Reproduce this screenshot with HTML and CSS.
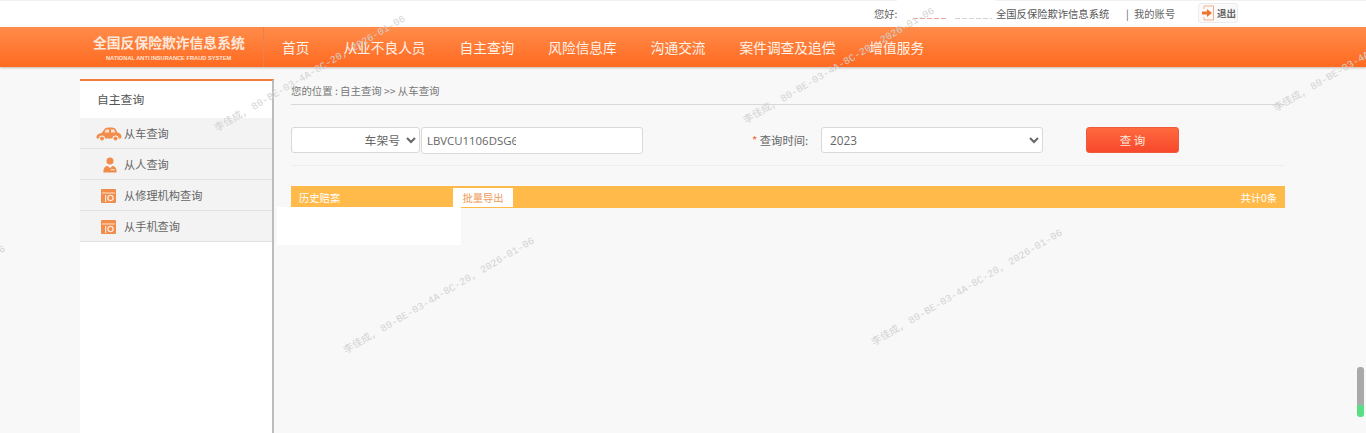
FILE: index.html
```html
<!DOCTYPE html>
<html lang="zh-CN">
<head>
<meta charset="utf-8">
<title>全国反保险欺诈信息系统</title>
<link rel="stylesheet" href="styles.css">
</head>
<body>
<div class="page">
  <header class="topbar">
    <span class="hello">您好:</span>
    <span class="redact"><i class="red-a"></i><i class="red-b"></i></span>
    <span class="sysname">全国反保险欺诈信息系统</span>
    <span class="sep">|</span>
    <span class="account">我的账号</span>
    <a class="logout">
      <svg width="14" height="16" viewBox="0 0 14 16"><path d="M3 4V1h9.500v14H3v-3" fill="none" stroke="#f2b08a" stroke-width="1"/><path d="M1 6.500h5V4l5 4-5 4V9.500H1z" fill="#f0752d"/></svg>
      <span>退出</span>
    </a>
  </header>
  <nav class="nav">
    <div class="logo">
      <div class="logo-cn">全国反保险欺诈信息系统</div>
      <div class="logo-en">NATIONAL ANTI INSURANCE FRAUD SYSTEM</div>
    </div>
    <ul class="menu">
      <li>首页</li><li>从业不良人员</li><li>自主查询</li><li>风险信息库</li><li>沟通交流</li><li>案件调查及追偿</li><li>增值服务</li>
    </ul>
  </nav>
  <div class="main">
    <aside class="side">
      <h2 class="side-title">自主查询</h2>
      <ul class="side-list">
        <li><span class="ico"><svg width="26" height="14" viewBox="0 0 26 14"><path d="M.5 10c0-2.500 2.500-3.500 5-4L9 1.500C10 .5 11 .5 14 .5s4.500 0 5.500 1.500l2 3.500c2 .5 4 1.500 4 4 0 1.500-.5 2-1.500 2h-1.500a3 3 0 0 0-6 0H9a3 3 0 0 0-6 0H1.500C.8 11.500.5 11 .5 10z" fill="#f28c4b"/><path d="M10 2.500h3v3H8.500zM15 2.500h3l1.500 3H15z" fill="#fbe3d2"/><circle cx="6" cy="11.500" r="2" fill="#f28c4b"/><circle cx="19.500" cy="11.500" r="2" fill="#f28c4b"/></svg></span>从车查询</li>
        <li><span class="ico ico-p"><svg width="14" height="16" viewBox="0 0 14 16"><circle cx="7" cy="4" r="3.500" fill="#f28c4b"/><path d="M.5 15.500c-.5-4 1.500-6.500 4-6.500l2.500 2 2.500-2c2.500 0 4.500 2.500 4 6.500z" fill="#f28c4b"/><rect x="8" y="12" width="3.500" height="1.200" fill="#fbe3d2"/></svg></span>从人查询</li>
        <li><span class="ico ico-c"><svg width="15" height="14" viewBox="0 0 15 14"><rect x="0" y="0" width="15" height="14" rx="1" fill="#f28c4b"/><rect x="1" y="3.500" width="13" height="1" fill="#fbe3d2"/><rect x="4" y="6" width="1.200" height="7" fill="#fbe3d2"/><circle cx="9.500" cy="9" r="2.600" fill="none" stroke="#fbe3d2" stroke-width="1.400"/></svg></span>从修理机构查询</li>
        <li><span class="ico ico-c"><svg width="15" height="14" viewBox="0 0 15 14"><rect x="0" y="0" width="15" height="14" rx="1" fill="#f28c4b"/><rect x="1" y="3.500" width="13" height="1" fill="#fbe3d2"/><rect x="4" y="6" width="1.200" height="7" fill="#fbe3d2"/><circle cx="9.500" cy="9" r="2.600" fill="none" stroke="#fbe3d2" stroke-width="1.400"/></svg></span>从手机查询</li>
      </ul>
    </aside>
    <section class="content">
      <div class="crumb">您的位置 : 自主查询 &gt;&gt; 从车查询</div>
      <form class="query">
        <select class="sel sel-type"><option>车架号</option></select>
        <div class="vin"><input class="inp" type="text" value="LBVCU1106DSG6"><i class="vin-mask"></i></div>
        <label class="time-label"><em>*</em> 查询时间:</label>
        <select class="sel sel-year"><option>2023</option></select>
        <button class="btn" type="button">查 询</button>
      </form>
      <div class="bar">
        <span class="bar-title">历史赔案</span>
        <span class="bar-export">批量导出</span>
        <span class="bar-total">共计0条</span>
        <i class="bar-mask"></i>
      </div>
    </section>
  </div>
  <div class="wm wm1">李佳成, 80-BE-03-4A-8C-20, 2026-01-06</div>
  <div class="wm wm2">李佳成, 80-BE-03-4A-8C-20, 2026-01-06</div>
  <div class="wm wm3">李佳成, 80-BE-03-4A-8C-20, 2026-01-06</div>
  <div class="wm wm4">李佳成, 80-BE-03-4A-8C-20, 2026-01-06</div>
  <div class="wm wm5">李佳成, 80-BE-03-4A-8C-20, 2026-01-06</div>
  <div class="wm wm6">李佳成, 80-BE-03-4A-8C-20, 2026-01-06</div>
  <div class="scroll-tip"></div>
</div>
</body>
</html>
```
FILE: styles.css
```css
* { box-sizing: border-box; }
html, body { margin: 0; height: 100%; overflow: hidden; }
body { background: #f8f8f8; font-family: "Noto Sans CJK SC", "Noto Sans", sans-serif; color: #666; font-size: 12px; }
ul { list-style: none; margin: 0; padding: 0; }
.page { position: relative; height: 433px; width: 1366px; overflow: hidden; display: flex; flex-direction: column; }

.topbar { height: 27px; flex: none; background: #fff; border-top: 1px solid #f1f1f1; padding: 0 0 0 874px; display: flex; align-items: center; font-size: 10.300px; line-height: 16px; color: #666; white-space: nowrap; }
.hello { width: 23px; flex: none; }
.redact { width: 99px; height: 21px; align-self: flex-start; background: #fff; margin-top: -1px; position: relative; flex: none; }
.red-a { position: absolute; left: 16px; top: 18px; width: 34px; height: 1px; background: repeating-linear-gradient(90deg, #eda79f 0 5px, #fff 5px 7px); }
.red-b { position: absolute; left: 58px; top: 18px; width: 37px; height: 1px; background: repeating-linear-gradient(90deg, #d3d3d3 0 5px, #fff 5px 7px); }
.sysname { width: 113px; flex: none; color: #555; }
.sep { margin-left: 17px; width: 8px; flex: none; }
.account { width: 42px; flex: none; }
.logout { margin-left: 22px; width: 40px; height: 20px; border: 1px solid #ececec; border-radius: 3px; background: #fafafa; display: flex; align-items: center; gap: 2px; padding-left: 2px; font-weight: 700; color: #666; font-size: 9.500px; margin-bottom: 3px; }

.nav { height: 40px; flex: none; background: linear-gradient(#ff8c4a, #ff6a21); box-shadow: 0 1px 2px rgba(120,70,30,.35); display: flex; padding-left: 80px; }
.logo { width: 184px; padding: 7px 0 0 13px; border-right: 1px solid #e8834f; color: #fff; }
.logo-cn { font-size: 13.800px; line-height: 17px; font-weight: 700; color: #fde9dc; white-space: nowrap; }
.logo-en { font-size: 5.700px; line-height: 8px; font-weight: 700; margin: 3px 0 0 13px; font-family: "Liberation Sans", sans-serif; white-space: nowrap; color: #fbe6d8; }
.menu { display: flex; gap: 34px; padding-left: 18px; color: #fff3ea; font-size: 13.700px; line-height: 40px; }
.menu li { white-space: nowrap; }

.main { flex: 1; display: flex; padding: 12px 81px 0 80px; min-height: 0; }
.side { width: 194px; flex: none; background: #fff; border-top: 2px solid #f27b3c; border-right: 2px solid #bdbdbd; }
.side-title { margin: 0; height: 37px; padding-left: 17px; font-weight: 400; font-size: 11.800px; line-height: 35px; color: #555; }
.side-list li { height: 31px; background: #f3f3f3; border-bottom: 1px solid #e0e0e0; display: flex; align-items: center; padding-left: 44px; position: relative; color: #666; font-size: 11.200px; line-height: 30px; }
.ico { position: absolute; left: 16px; top: 9px; display: block; line-height: 0; }
.ico-p { left: 23px; top: 8px; }
.ico-c { left: 21px; top: 9px; }

.content { flex: 1; padding-left: 17px; min-width: 0; }
.crumb { height: 26px; padding-top: 4px; border-bottom: 1px solid #d8d8d8; font-size: 10.400px; line-height: 15px; color: #777; white-space: nowrap; }
.query { height: 61px; border-bottom: 1px solid #eeeeee; display: flex; align-items: flex-start; padding-top: 22px; }
.sel { height: 26px; background-color: #fff; border: 1px solid #d9d9d9; border-radius: 3px; font-family: "Open Sans", "Noto Sans CJK SC", sans-serif; font-size: 11.800px; color: #666; }
.sel-type { width: 129px; text-align: right; text-align-last: right; flex: none; padding-right: 3px; }
.vin { position: relative; width: 222px; flex: none; margin-left: 1px; }
.inp { width: 100%; height: 27px; border: 1px solid #d9d9d9; border-radius: 3px; background: #fff; padding: 0 4px 0 5px; font-family: "Open Sans", sans-serif; font-size: 11.400px; color: #666; }
.vin-mask { position: absolute; left: 95px; top: 1px; width: 125px; height: 25px; background: #fff; border-radius: 0 3px 3px 0; }
.time-label { width: 69px; margin-left: 109px; line-height: 27px; font-size: 11.300px; color: #666; flex: none; white-space: nowrap; }
.time-label em { color: #f0683a; font-style: normal; }
.sel-year { width: 222px; padding-left: 4px; flex: none; }
.btn { width: 93px; height: 26px; margin-left: 43px; flex: none; border: 1px solid #ee5a3a; border-radius: 3px; background: linear-gradient(#ff6a3f, #f8482c); color: #ffe9df; font-family: inherit; font-size: 11.500px; padding: 0; }

.bar { position: relative; height: 22px; margin-top: 20px; background: #ffba4a; display: flex; align-items: center; padding: 0 8px; color: #fff; font-size: 10.300px; }
.bar-title { width: 154px; flex: none; }
.bar-export { width: 60px; height: 19px; line-height: 19px; text-align: center; background: #fff; color: #ee9a55; }
.bar-total { margin-left: auto; }
.bar-mask { position: absolute; left: -14px; top: 21px; width: 184px; height: 38px; background: #fff; }

.wm { position: absolute; width: 220px; height: 14px; font: 10px/14px "Liberation Mono", "Noto Sans CJK SC", monospace; color: #d2d2d2; transform: rotate(-30.500deg); transform-origin: 0 50%; white-space: nowrap; letter-spacing: .1px; }
.wm1 { left: 345px; top: 345px; }
.wm2 { left: 873px; top: 337px; }
.wm3 { left: 216px; top: 123px; }
.wm4 { left: 745px; top: 115px; }
.wm5 { left: 1275px; top: 103px; }
.wm6 { left: -184px; top: 353px; }

.scroll-tip { position: absolute; left: 1357px; top: 367px; width: 7px; height: 50px; border-radius: 3px; background: linear-gradient(#a9a9a9 0, #a9a9a9 74%, #59de83 78%, #59de83 100%); }
```
